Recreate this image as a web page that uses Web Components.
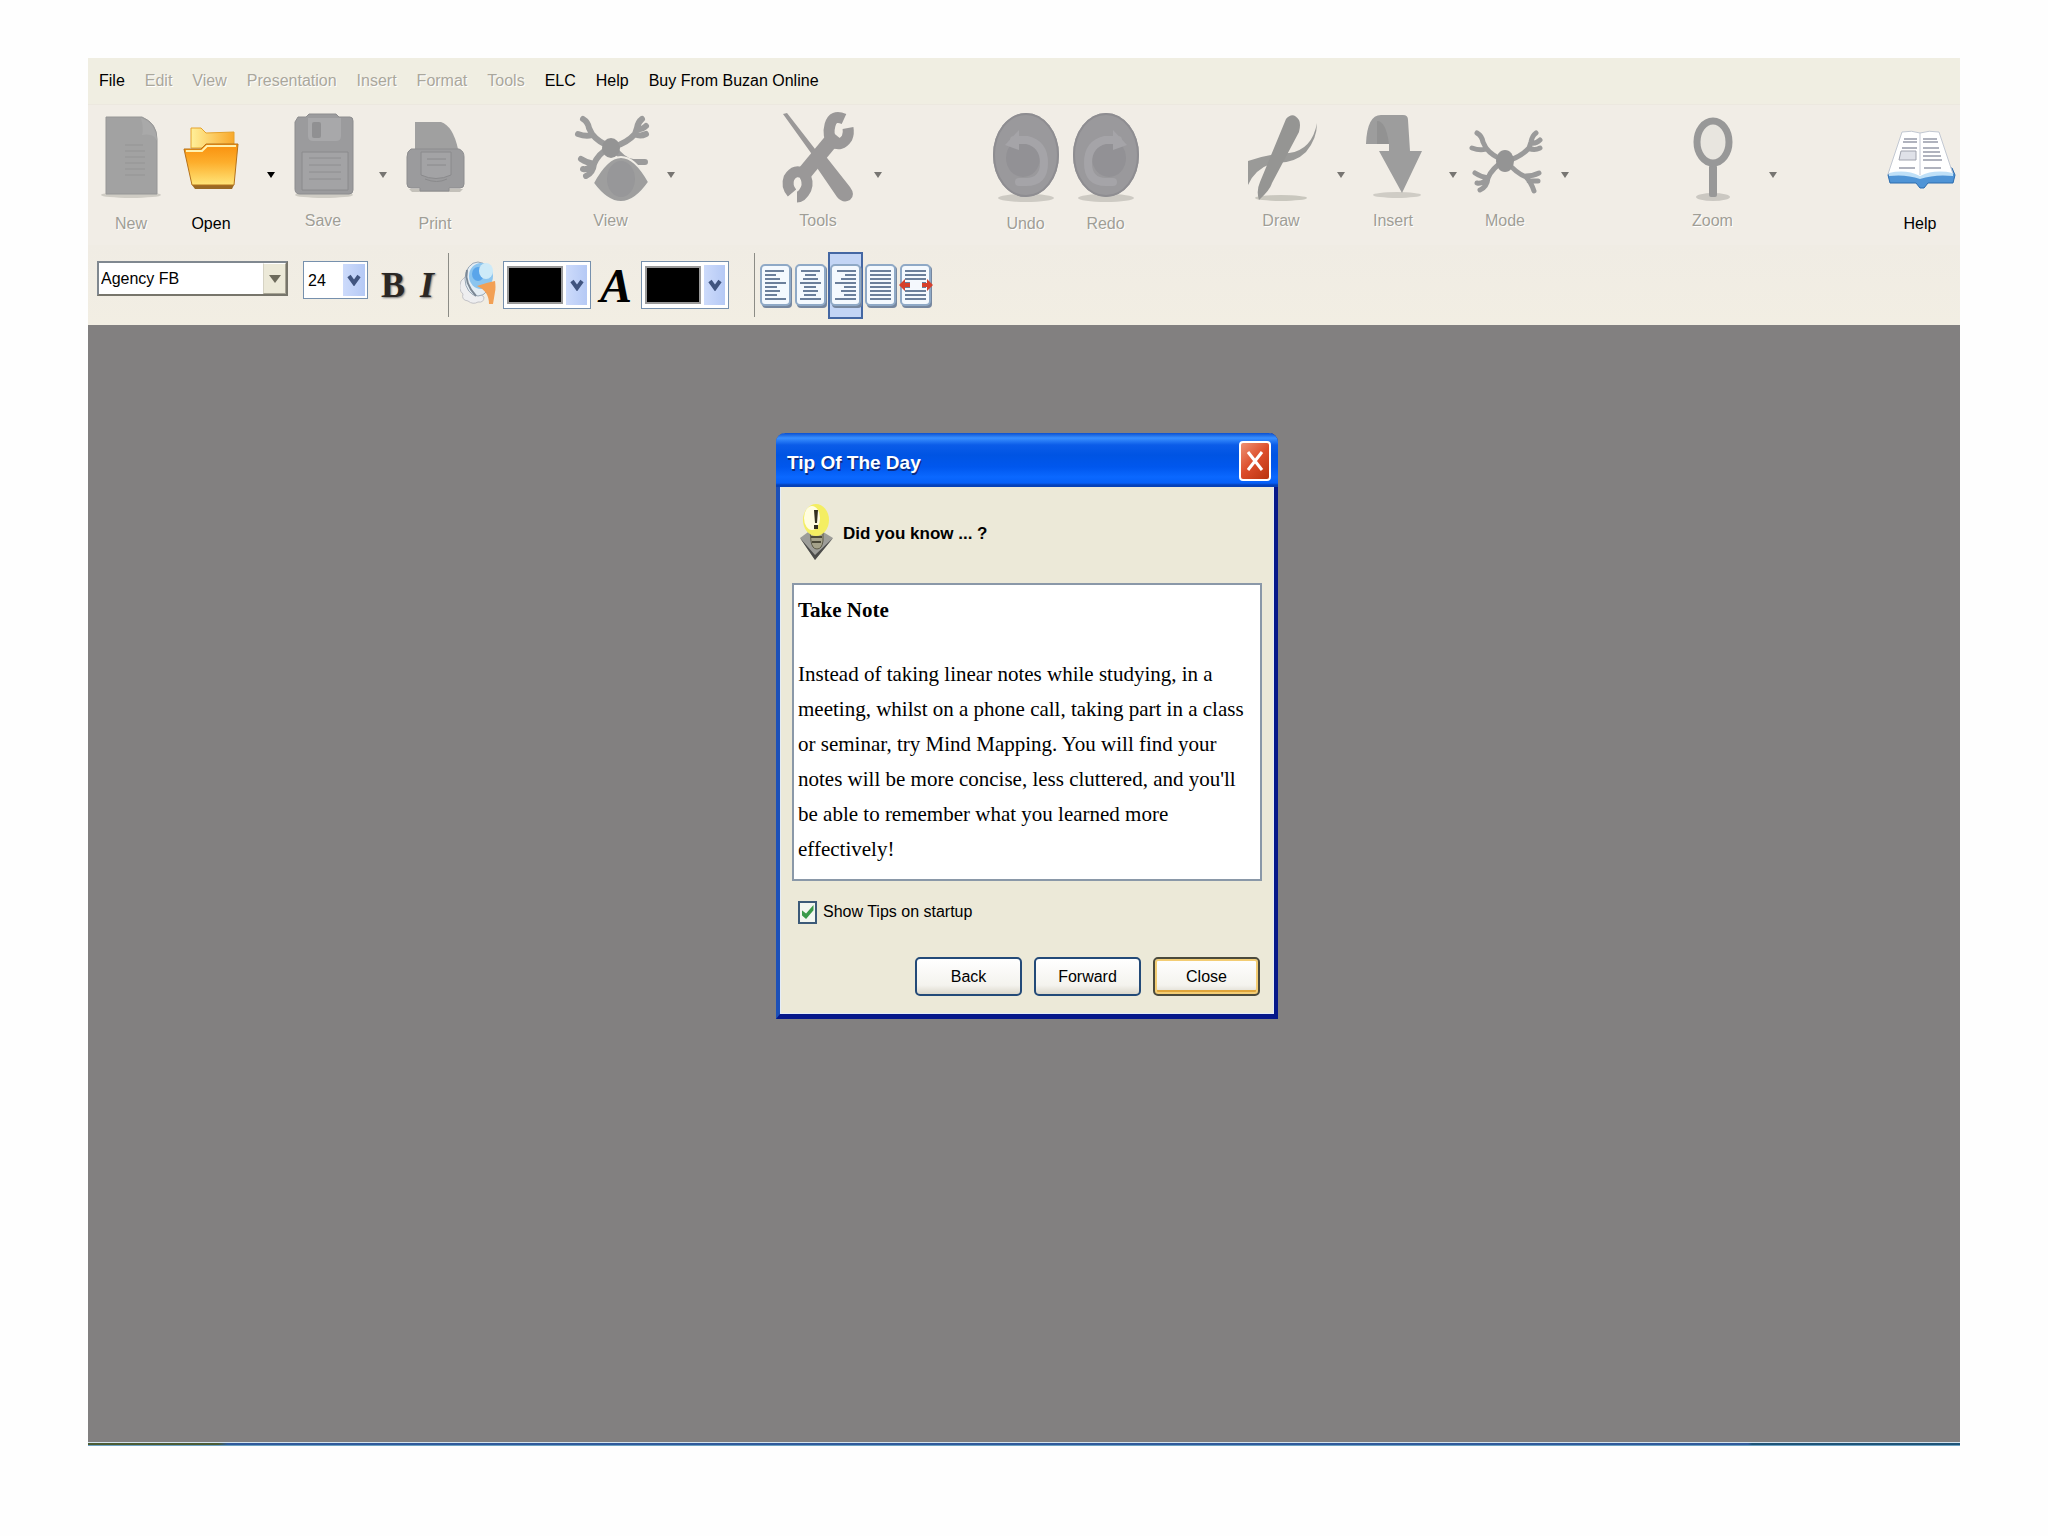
<!DOCTYPE html>
<html lang="en">
<head>
<meta charset="utf-8">
<title>Mind Map Editor</title>
<style>
  body {
    margin: 0;
    background: #fefefe;
    font-family: "Liberation Sans", Arial, sans-serif;
    font-size: 16px;
    color: #000;
  }
</style>
</head>
<body>
<mind-app></mind-app>

<script>
// limbs of the little map figure, shared by View and Mode
const LIMBS = `
  <path d="M8 22q5 3 6 9l3 6q6 8 19 13M3 37q8 3 14 1M67 22q-4 3-5 9l-2 6q-8 9-22 13M71 37q-6 3-11 0M71 29q-4 4-9 3"/>
  <path d="M6 62q6 4 13 5q4-10 16-17M11 79q7-3 8-12M8 72q6 1 11-5"/>`;

const ICONS = {
  new: `
    <ellipse cx="36" cy="84" rx="30" ry="3" fill="#cfccc4"/>
    <path d="M11 6h36q15 6 15 22v55H11z" fill="#a2a2a2" stroke="#969696"/>
    <path d="M46 7q3 12 1 17 12-2 15 6-1-18-16-23z" fill="#a9a9a9"/>
    <path d="M30 34h18M30 40h20M30 46h20M30 52h20M30 58h20M30 64h20" stroke="#949494"/>`,
  open: `
    <defs>
      <linearGradient id="f" x1="0" y1="0" x2="0" y2="1">
        <stop offset="0" stop-color="#f98f0c"/><stop offset=".45" stop-color="#fdae2c"/><stop offset="1" stop-color="#ffe67a"/>
      </linearGradient>
      <linearGradient id="b"><stop offset="0" stop-color="#fff09a"/><stop offset="1" stop-color="#f9a82a"/></linearGradient>
    </defs>
    <path d="M17 74h42l-2 4H20z" fill="#9a6a25"/>
    <path d="M16 17h10l5 5 28-1v16H16z" fill="url(#b)" stroke="#e5a22c"/>
    <path d="M9 38h17l5-5h32l-4 41H17z" fill="url(#f)" stroke="#b5721a"/>
    <path d="M11 40h16l5-5h29" fill="none" stroke="#fff2b0" stroke-width="2"/>`,
  save: `
    <ellipse cx="37" cy="84" rx="29" ry="3" fill="#cfccc4"/>
    <path d="M11 6h8l3-3h27l3 3h11q3 0 3 4v69q0 4-4 4H13q-5 0-5-5V11z" fill="#9b9b9d" stroke="#8d8d8f"/>
    <path d="M21 7h33v18q0 5-5 5H26q-5 0-5-5z" fill="#a8a8aa"/><rect x="25" y="11" width="9" height="16" rx="2" fill="#909092"/>
    <path d="M15 41h46v38H15z" fill="#a3a3a5" stroke="#8a8a8c"/>
    <path d="M22 47h32M22 54h32M22 61h32M22 68h32" stroke="#8e8e90"/>`,
  print: `
    <path d="M10 78h54l-3 3H13z" fill="#c4c1ba"/>
    <path d="M16 11h26q12 4 17 27H16z" fill="#a0a0a0"/>
    <path d="M12 38h48q5 2 5 8v27q0 4-4 4H50v3H21v-3H12q-4 0-4-4V46q0-6 4-8z" fill="#9b9b9d" stroke="#8d8d8f"/>
    <path d="M22 41h30v23q-15 7-30 0z" fill="#a3a3a5" stroke="#8a8a8c"/>
    <path d="M28 48h19M28 54h19M26 68q12 5 22 0" fill="none" stroke="#8a8a8c"/>`,
  view: `
    <g transform="translate(0 -14)" fill="none" stroke="#9b9b9b" stroke-width="6" stroke-linecap="round">${LIMBS}<path d="M38 50q10 14 20 15l12 0"/></g>
    <ellipse cx="36" cy="37" rx="9" ry="10" fill="#949494"/>
    <path d="M18 72Q32 46 46 46T74 71Q60 91 46 91T18 72z" fill="#9e9e9e" stroke="#f0ede6" stroke-width="2"/>
    <ellipse cx="46" cy="68" rx="14" ry="18" fill="#979799"/>`,
  tools: `
    <path d="M1 3l4-1 28 36 5 0 30 38q6 8 0 13-7 4-13-3L29 48l0-6z" fill="#9a9898"/>
    <path d="M20 65l34-41" stroke="#9a9898" stroke-width="15"/>
    <path d="M62 8q-11-5-14 6t3 17q8 5 14-4 2-5 1-10M10 82q-6-7-3-15 6-10 15-4 5 8 2 15-4 8-9 8" fill="none" stroke="#9a9898" stroke-width="11"/>`,
  undo: `
    <ellipse cx="36" cy="87" rx="28" ry="4" fill="#cdcac3"/><ellipse cx="36" cy="44" rx="33" ry="42" fill="#9a999c"/>
    <ellipse cx="36" cy="44" rx="32" ry="41" fill="none" stroke="#8e8d91" stroke-width="2"/><ellipse cx="33" cy="47" rx="17" ry="19" fill="#929195"/>
    <path d="M24 29h13q17 4 17 23 0 19-18 19h-7" fill="none" stroke="#a5a4a8" stroke-width="8" stroke-linecap="round"/>
    <path d="M15 34l14-15v20z" fill="#a5a4a8"/>`,
  draw: `
    <ellipse cx="36" cy="87" rx="26" ry="3" fill="#c9c7be"/>
    <path d="M72 12q-5 27-28 30Q22 43 3 50v24q7-16 25-22 21 1 33-11 11-13 11-29z" fill="#9a9a98"/>
    <path d="M41 8q7-8 13 1 2 4 0 12L27 72q-2 7-13 17-3-9 1-18z" fill="#959593"/>`,
  insert: `
    <ellipse cx="40" cy="84" rx="24" ry="3" fill="#cfccc5"/>
    <path d="M9 33Q10 4 24 4h22q5 0 5 5l2 31h12L45 82 22 40h10v-7z" fill="#9d9d9d"/>
    <path d="M20 10q9 0 12 23H20z" fill="#929292"/>`,
  mode: `
    <g fill="none" stroke="#9a9a9a" stroke-width="5" stroke-linecap="round">${LIMBS}<path d="M37 50q10 12 20 16 5 5 8 14M57 65q7 0 13-3M60 70h9"/></g>
    <ellipse cx="36" cy="50" rx="9" ry="11" fill="#949494"/>`,
  zoom: `
    <ellipse cx="36" cy="86" rx="17" ry="4" fill="#cbc8c2"/>
    <rect x="32" y="54" width="8" height="32" rx="2" fill="#989898"/>
    <ellipse cx="36" cy="31" rx="16" ry="21" fill="#e8e5df" stroke="#989898" stroke-width="7"/>`,
  help: `
    <path d="M4 64l2 8h26l4 5h4l4-5h25l2-8-3-7H7z" fill="#4f94d6" stroke="#2c6cae"/>
    <path d="M18 21q10-2 18 1 9-3 19-1l14 42q-18-2-33 3-14-5-32-3z" fill="#fff" stroke="#c2c8d2"/>
    <path d="M5 62q17-4 31 3 14-7 33-3v3q-18-2-33 3-14-5-31-3z" fill="#bfe0f8"/>
    <path d="M36 22v42" stroke="#c5cad6"/>
    <path d="M20 28h13M19 31h14M39 28h14M39 31h15M39 37h16M39 41h17M39 45h18M39 49h19M18 37h15M15 57h16M40 57h17" stroke="#b0b3be" stroke-width="2"/>
    <path d="M17 40h15v9H15z" fill="#dfe1e8" stroke="#a0a3ae"/>`
};
ICONS.redo = `<g transform="translate(72) scale(-1 1)">${ICONS.undo}</g>`;

const CHEVRON = '<svg width="14" height="12" viewBox="0 0 14 12" aria-hidden="true"><path d="M2 2l5 7 5-7" fill="none" stroke="#40547f" stroke-width="4"/></svg>';

class MenuBar extends HTMLElement {
  constructor() {
    super();
    this.attachShadow({ mode: 'open' });
  }

  connectedCallback() {
    const items = ['File', 'Edit', 'View', 'Presentation', 'Insert', 'Format', 'Tools', 'ELC', 'Help', 'Buy From Buzan Online'];
    const enabled = ['File', 'ELC', 'Help', 'Buy From Buzan Online'];
    this.shadowRoot.innerHTML = `
      <style>
        :host { display: block; background: #f0eee2; }
        nav { display: flex; flex-wrap: wrap; gap: 20px; padding: 11px; }
        button { border: 0; padding: 0; background: none; font: inherit; line-height: 24px; color: #000; }
        button:disabled { color: #aaa79c; text-shadow: 1px 1px #fff; }
      </style>
      <nav>${items.map(i => `<button ${enabled.includes(i) ? '' : 'disabled'}>${i}</button>`).join('')}</nav>
    `;
  }
}

class ToolButton extends HTMLElement {
  constructor() {
    super();
    this.attachShadow({ mode: 'open' });
  }

  connectedCallback() {
    const off = this.hasAttribute('off') ? 'disabled' : '';
    const menu = this.hasAttribute('menu');
    this.shadowRoot.innerHTML = `
      <style>
        :host { display: flex; }
        button { border: 0; padding: 0; background: none; font: inherit; color: #000; }
        button:disabled { color: #a09e96; text-shadow: 1px 1px #fff; }
        .main { width: 72px; display: flex; flex-direction: column; align-items: center; }
        .main svg { display: block; overflow: visible; }
        .label { line-height: 24px; padding-top: 9px; }
        :host([menu][off]) .label { padding-top: 6px; }
        .drop { width: 32px; display: flex; justify-content: flex-end; padding: 61px 4px 0 0; }
        .drop:disabled { opacity: .5; }
      </style>
      <button class="main" ${off}>
        <svg width="72" height="92" viewBox="0 0 72 92" aria-hidden="true">${ICONS[this.getAttribute('icon')]}</svg>
        <span class="label"><slot></slot></span>
      </button>
      ${menu ? `<button class="drop" aria-label="More" ${off}><svg width="8" height="6" viewBox="0 0 8 6"><path d="M0 0h8L4 6z"/></svg></button>` : ''}
    `;
  }
}

class MainToolbar extends HTMLElement {
  constructor() {
    super();
    this.attachShadow({ mode: 'open' });
    this.shadowRoot.innerHTML = `
      <style>
        :host { display: flex; justify-content: space-between; align-items: flex-start; height: 141px; box-sizing: border-box; padding: 6px 4px 0 7px; background: #f1ede6; border-top: 1px solid #ece8df; }
        div { display: flex; gap: 8px; align-items: flex-start; }
      </style>
      <div>
        <tool-button icon="new" off>New</tool-button>
        <tool-button icon="open" menu>Open</tool-button>
        <tool-button icon="save" menu off>Save</tool-button>
        <tool-button icon="print" off>Print</tool-button>
      </div>
      <div><tool-button icon="view" menu off>View</tool-button></div>
      <div><tool-button icon="tools" menu off>Tools</tool-button></div>
      <div>
        <tool-button icon="undo" off>Undo</tool-button>
        <tool-button icon="redo" off>Redo</tool-button>
      </div>
      <div>
        <tool-button icon="draw" menu off>Draw</tool-button>
        <tool-button icon="insert" menu off>Insert</tool-button>
        <tool-button icon="mode" menu off>Mode</tool-button>
      </div>
      <div><tool-button icon="zoom" menu off>Zoom</tool-button></div>
      <div><tool-button icon="help">Help</tool-button></div>
    `;
  }
}

class ColorPick extends HTMLElement {
  constructor() {
    super();
    this.attachShadow({ mode: 'open' });
  }

  connectedCallback() {
    this.shadowRoot.innerHTML = `
      <style>
        :host { display: block; }
        button { display: flex; gap: 3px; width: 88px; height: 48px; box-sizing: border-box; padding: 3px; background: #fff; border: 1px solid #7690ad; }
        .swatch { flex: 1; background: #000; border: 2px solid #999; margin: 1px 0; }
        .drop { width: 21px; display: flex; align-items: center; justify-content: center; background: linear-gradient(90deg, #cddbfb, #b5c9f5); }
      </style>
      <button aria-label="${this.getAttribute('label')}">
        <span class="swatch"></span><span class="drop">${CHEVRON}</span>
      </button>
    `;
  }
}

class AlignButton extends HTMLElement {
  constructor() {
    super();
    this.attachShadow({ mode: 'open' });
  }

  connectedCallback() {
    const kind = this.getAttribute('kind');
    const widths = kind === 'justify' || kind === 'fit' ? [21, 21, 21, 21, 21, 21, 21, 21] : [19, 11, 15, 21, 12, 15, 12, 21];
    const lines = widths.map((w, i) => {
      const x = kind === 'left' ? 6 : kind === 'right' ? 27 - w : 6 + Math.floor((21 - w) / 2);
      return `M${x} ${8 + i * 4}h${w}`;
    }).join('');
    const arrows = '<path d="M11 18h12v8H11z" fill="#f4f8fd"/><path d="M0 22l6-6v4h5v4H6v4zM34 22l-6-6v4h-5v4h5v4z" fill="#d5402c"/>';
    this.shadowRoot.innerHTML = `
      <style>
        :host { display: block; }
        button { display: flex; align-items: center; justify-content: center; width: 35px; height: 67px; box-sizing: border-box; padding: 0; background: none; border: 2px solid transparent; }
        :host([pressed]) button { background: #c3d5f5; border-color: #4467a3; }
        svg { flex: none; }
      </style>
      <button aria-label="Align ${kind}" aria-pressed="${this.hasAttribute('pressed')}">
        <svg width="34" height="46" viewBox="0 0 34 46" aria-hidden="true">
          <rect x="3" y="3" width="30" height="42" rx="4" fill="#76879f"/>
          <rect x="2" y="2" width="29" height="40" rx="4" fill="#f4f9fe" stroke="#8fa9c6" stroke-width="2"/>
          <path d="${lines}" stroke="#6b7f9b" stroke-width="2"/>
          ${kind === 'fit' ? arrows : ''}
        </svg>
      </button>
    `;
  }
}

class FormatBar extends HTMLElement {
  constructor() {
    super();
    this.attachShadow({ mode: 'open' });
    this.shadowRoot.innerHTML = `
      <style>
        :host { display: flex; flex-wrap: wrap; align-items: flex-start; padding: 7px 9px 6px; background: linear-gradient(#f0ece4, #f2eee3); }
        label { display: flex; box-sizing: border-box; background: #fff; border: 1px solid #7690ad; margin-top: 9px; }
        select { appearance: none; flex: 1; min-width: 0; border: 0; padding: 0 2px; background: none; font: inherit; color: #000; }
        .font { width: 191px; height: 35px; border: 2px solid; border-color: #808890 #77756b #77756b #808890; }
        .size { width: 65px; height: 38px; padding: 2px; margin-left: 15px; }
        .up { width: 23px; display: flex; align-items: center; justify-content: center; background: #ece9d8; border: 1px solid; border-color: #fff #a7a494 #a7a494 #d6d3c4; box-sizing: border-box; }
        .drop { width: 22px; display: flex; align-items: center; justify-content: center; background: linear-gradient(90deg, #cddbfb, #b5c9f5); }
        .glyph { border: 0; padding: 0; background: none; font: bold 36px/67px "Liberation Serif", "Times New Roman", serif; color: #2b2724; text-shadow: 1px 1px 2px #777; }
        .b { margin-left: 12px; width: 26px; }
        .i { margin-left: 11px; width: 20px; font-style: italic; }
        .a { font-size: 48px; font-style: italic; width: 50px; color: #000; text-shadow: none; }
        .rule { width: 1px; height: 64px; background: #8c8c86; margin: 1px 0 0 11px; }
        .rule.wide { margin-left: 25px; }
        .paint { width: 36px; height: 46px; padding: 0; border: 0; background: none; margin: 9px 7px 0 11px; }
        color-pick { margin-top: 9px; }
        .align { display: flex; margin-left: 3px; }
      </style>
      <label class="font"><select aria-label="Font"><option>Agency FB</option></select>
        <span class="up"><svg width="12" height="8" viewBox="0 0 12 8"><path d="M0 0h12L6 8z" fill="#6d6b5c"/></svg></span></label>
      <label class="size"><select aria-label="Size"><option>24</option></select><span class="drop">${CHEVRON}</span></label>
      <button class="glyph b">B</button>
      <button class="glyph i">I</button>
      <span class="rule"></span>
      <button class="paint" aria-label="Fill">
        <svg width="36" height="46" viewBox="0 0 36 46" aria-hidden="true">
          <path d="M1 20q-3 9 2 13-2 6 5 7 5 4 10 1 6 1 6-5L12 27 7 14z" fill="#eeeef0" stroke="#c2c2c6"/>
          <ellipse cx="18" cy="18" rx="13" ry="17" fill="#e4edf4" stroke="#9aa8b6"/>
          <ellipse cx="21" cy="15" rx="12" ry="13" fill="#8cc5ef"/>
          <ellipse cx="18" cy="13" rx="6" ry="7" fill="#5aa5ea"/>
          <ellipse cx="26" cy="10" rx="7" ry="8" fill="#cdeaf8"/>
          <path d="M7 9q-3 13 9 26" fill="none" stroke="#7b8794" stroke-width="2"/>
          <path d="M17 25q8-3 18-5 1 7 0 11-1 6-2 12h-4q0-13-12-18z" fill="#f2a055"/>
        </svg>
      </button>
      <color-pick label="Fill colour"></color-pick>
      <button class="glyph a">A</button>
      <color-pick label="Text colour"></color-pick>
      <span class="rule wide"></span>
      <div class="align">
        <align-button kind="left"></align-button>
        <align-button kind="center"></align-button>
        <align-button kind="right" pressed></align-button>
        <align-button kind="justify"></align-button>
        <align-button kind="fit"></align-button>
      </div>
    `;
  }
}

class TipDialog extends HTMLElement {
  constructor() {
    super();
    this.attachShadow({ mode: 'open' });
    this.shadowRoot.innerHTML = `
      <style>
        :host { display: block; box-sizing: border-box; width: 502px; background: #ece9d8; border: solid #0a31b0; border-width: 0 4px 5px; border-left-color: #1c50b8; border-right-color: #06188a; border-bottom-color: #06188a; border-radius: 9px 9px 0 0; }
        header { display: flex; align-items: center; justify-content: space-between; height: 54px; box-sizing: border-box; margin: 0 -4px; padding: 4px 7px 0 11px; border-radius: 9px 9px 0 0; border-bottom: 2px solid #0541b8;
          background: linear-gradient(#0a50d0, #3a90ff 5px, #0b5ce8 12px, #0054e3 22px, #0057ee 34px, #0a68ff 44px, #0660f8 50px, #0541b8); }
        h1 { margin: 0; padding-top: 4px; font-size: 19px; line-height: 28px; color: #fff; text-shadow: 1px 2px #0b2b80; }
        .x { width: 32px; height: 40px; padding: 0; border: 2px solid #fff; border-radius: 4px; background: linear-gradient(135deg, #ee9273, #dc4d2b 50%, #b9340f); display: flex; align-items: center; justify-content: center; }
        .body { padding: 16px 12px 17px; border: 1px solid #e4ecf8; border-top: 0; }
        .lead { display: flex; align-items: center; gap: 9px; padding-left: 6px; height: 58px; }
        h2 { margin: 0; padding-top: 4px; font-size: 17px; line-height: 24px; }
        .tip { box-sizing: border-box; height: 298px; margin: 22px -1px 0; padding: 8px 12px 0 4px; background: #fff; border: 2px solid #8a98a8; font: 21px/35px "Liberation Serif", "Times New Roman", serif; }
        .tip ::slotted(h3) { margin: 0 0 29px; font: inherit; font-weight: bold; }
        .tip ::slotted(p) { margin: 0; }
        .show { display: flex; align-items: center; gap: 6px; margin: 19px 0 0 5px; line-height: 24px; }
        .show input { appearance: none; width: 19px; height: 23px; margin: 0; border: 2px solid #3c5a78; background: #f3f6f0; display: grid; place-items: center; }
        .show input:checked::before { content: ""; width: 12px; height: 14px; background: #3a9a4a; clip-path: polygon(0 35%, 38% 60%, 100% 0, 100% 38%, 38% 100%, 0 72%); }
        footer { display: flex; justify-content: flex-end; gap: 12px; margin: 33px 1px 0 0; }
        footer button { width: 107px; height: 39px; padding: 0; font: inherit; color: #000; border: 2px solid #234a78; border-radius: 5px; background: linear-gradient(#fff, #f4f3ee 75%, #dcd8cc); }
        footer .default { border-color: #4b4a3c; box-shadow: inset 0 0 0 2px #f3cd74, inset 0 -4px #e0a53a; }
      </style>
      <header>
        <h1><slot name="title"></slot></h1>
        <button class="x" aria-label="Close window"><svg width="20" height="24" viewBox="0 0 20 24"><path d="M3 3l14 18M17 3L3 21" stroke="#fff" stroke-width="3"/></svg></button>
      </header>
      <div class="body">
        <div class="lead">
          <svg width="35" height="58" viewBox="0 0 35 58" aria-hidden="true">
            <path d="M1 35l15-11 18 11-18 22z" fill="#9d9d99"/><path d="M1 35l15 22 18-22-18 17z" fill="#4c4c4a"/>
            <path d="M11 28h13v10q-1 8-6 8t-6-8z" fill="#a5a28a" stroke="#5d5b48"/><path d="M12 34h11M13 39h9" stroke="#4b4938" stroke-width="2"/>
            <ellipse cx="17" cy="17" rx="13" ry="16" fill="#f4ee62"/><ellipse cx="13" cy="15" rx="8" ry="12" fill="#fffde0"/>
            <path d="M15 7h4l-1 13h-2zM15 22h4v4h-4z" fill="#33301f"/>
          </svg>
          <h2>Did you know ... ?</h2>
        </div>
        <div class="tip"><slot></slot></div>
        <label class="show"><input type="checkbox" checked>Show Tips on startup</label>
        <footer>
          <button>Back</button>
          <button>Forward</button>
          <button class="default">Close</button>
        </footer>
      </div>
    `;
  }
}

class MindApp extends HTMLElement {
  constructor() {
    super();
    this.attachShadow({ mode: 'open' });
    this.shadowRoot.innerHTML = `
      <style>
        :host { display: flex; flex-direction: column; box-sizing: border-box; min-height: 100vh; padding: 58px 88px 90px; }
        main { position: relative; flex: 1; min-height: 720px; background: #828080; }
        /* free-floating window on the workspace */
        tip-dialog { position: absolute; left: 688px; top: 108px; }
        .edge { height: 2px; border-top: 1px solid #d3e2ee; border-bottom: 1px solid #6fa3c4; background: linear-gradient(90deg, #4c5c34 130px, #2f5a9c 140px, #2f5a9c 1660px, #1d5478 1664px); }
      </style>
      <menu-bar></menu-bar>
      <main-toolbar></main-toolbar>
      <format-bar></format-bar>
      <main>
        <tip-dialog>
          <span slot="title">Tip Of The Day</span>
          <h3>Take Note</h3>
          <p>Instead of taking linear notes while studying, in a meeting, whilst on a phone call, taking part in a class or seminar, try Mind Mapping. You will find your notes will be more concise, less cluttered, and you'll be able to remember what you learned more effectively!</p>
        </tip-dialog>
      </main>
      <div class="edge"></div>
    `;
  }
}

customElements.define('menu-bar', MenuBar);
customElements.define('tool-button', ToolButton);
customElements.define('main-toolbar', MainToolbar);
customElements.define('color-pick', ColorPick);
customElements.define('align-button', AlignButton);
customElements.define('format-bar', FormatBar);
customElements.define('tip-dialog', TipDialog);
customElements.define('mind-app', MindApp);
</script>
</body>
</html>
